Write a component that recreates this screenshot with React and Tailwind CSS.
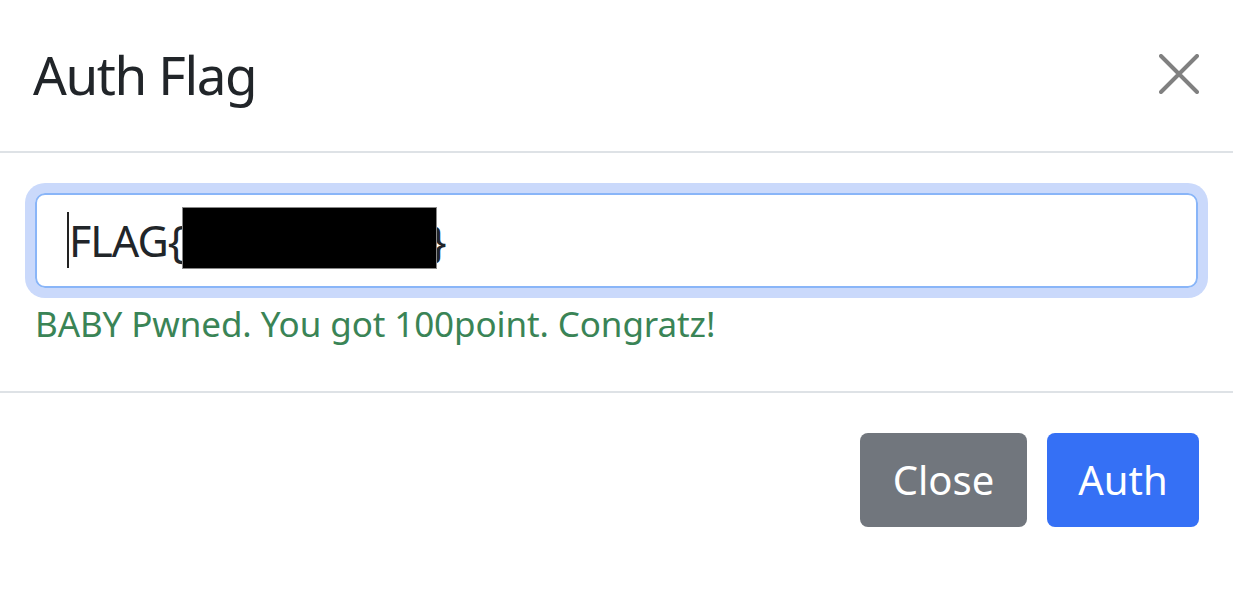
import React from 'react';

const font = { fontFamily: '"Noto Sans", "Open Sans", sans-serif' };

function CloseIcon() {
  return (
    <svg width="40" height="40" viewBox="0 0 40 40" fill="none" stroke="#808080" strokeWidth="4" strokeLinecap="round">
      <path d="M2 2 L38 38 M38 2 L2 38" />
    </svg>
  );
}

export default function App() {
  return (
    <div className="w-[1233px] h-[604px] bg-white overflow-hidden" style={font}>
      {/* header */}
      <div className="h-[153px] flex items-center justify-between pl-[33px] pr-[34px] border-b-2 border-[#dee2e6]">
        <h5 className="text-[53px] leading-none tracking-[-1.4px] text-[#212529] font-normal -mt-[2px]">Auth Flag</h5>
        <button className="w-[40px] h-[40px] -mt-[4px]">
          <CloseIcon />
        </button>
      </div>

      {/* body */}
      <div className="px-[35px] pt-[40px] h-[240px] border-b-2 border-[#dee2e6]">
        <div className="h-[95px] rounded-[10px] border-2 border-[#89b5f8] shadow-[0_0_0_10px_#cad9fb] flex items-center pl-[30px]">
          <span className="w-[2px] h-[56px] bg-[#222] -mt-[2px]"></span>
          <span className="text-[43px] leading-none tracking-[-1px] text-[#212529] flex items-center">
            FLAG{'{'}
            <span className="inline-block w-[255px] h-[62px] bg-black border border-[#888] -ml-[1px] -mr-[7px] relative -top-[3px]"></span>
            {'}'}
          </span>
        </div>
        <p className="mt-[18px] text-[35px] leading-none tracking-[-0.1px] text-[#3a8456]">
          BABY Pwned. You got 100point. Congratz!
        </p>
      </div>

      {/* footer */}
      <div className="flex justify-end gap-[20px] pt-[40px] pr-[34px]">
        <button className="w-[167px] h-[94px] rounded-[8px] bg-[#71767d] text-white text-[40px] leading-none">Close</button>
        <button className="w-[152px] h-[94px] rounded-[8px] bg-[#3570f5] text-white text-[40px] leading-none">Auth</button>
      </div>
    </div>
  );
}
